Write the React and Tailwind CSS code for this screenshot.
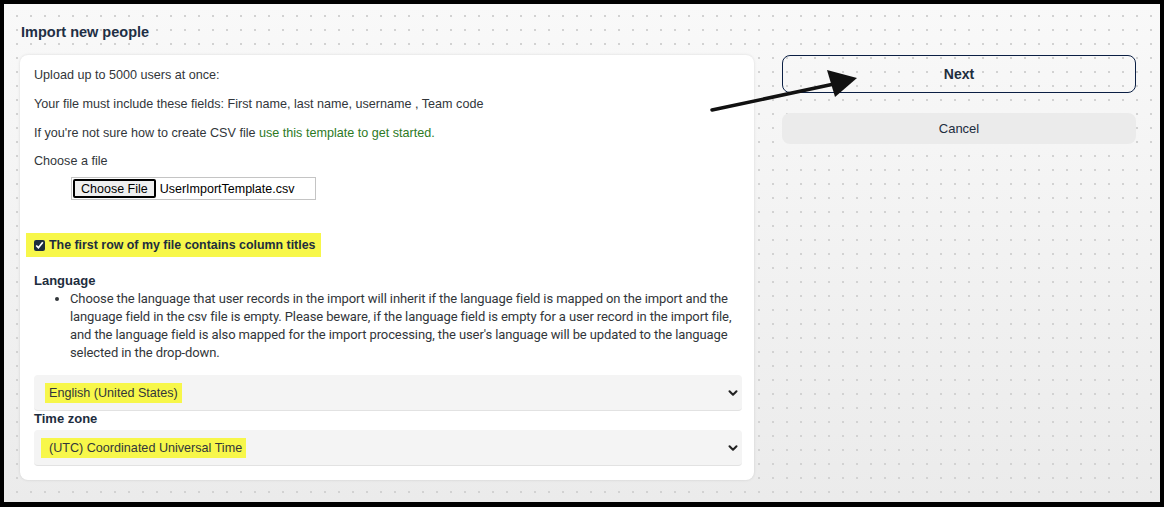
import { ChevronDown } from 'lucide-react';

const body = "font-['Liberation_Sans',Arial,sans-serif]";

function Select({ value, wide }) {
  return (
    <div className="flex h-[36px] items-center justify-between rounded-[4px] border-b border-[#e2e2e2] bg-[#f4f4f4] pl-[11px] pr-[2px]">
      <span className={`bg-[#f7f74a] py-[2px] text-[12.6px] leading-[16px] text-[#32363a] ${wide ? 'pl-[8px] pr-[4px] -ml-[4px]' : 'px-[4px]'}`}>
        {value}
      </span>
      <ChevronDown size={14} strokeWidth={3.5} className="text-[#222]" />
    </div>
  );
}

function Arrow() {
  return (
    <svg className="pointer-events-none absolute left-[706px] top-[68px]" width="160" height="50" viewBox="0 0 160 50">
      <line x1="6" y1="42" x2="128" y2="16" stroke="#111" strokeWidth="3.5" strokeLinecap="round" />
      <polygon points="151,10 121,2 129,29" fill="#111" />
    </svg>
  );
}

export default function App() {
  return (
    <div className={`relative h-[507px] w-[1164px] bg-black pb-[5px] pl-[4px] pr-[4px] pt-[4px] ${body}`}>
      <div className="h-full w-full bg-[radial-gradient(circle,#d2d2d2_0.9px,transparent_1.3px),linear-gradient(#f9f9f9,#ebebeb)] [background-position:6px_5px,0_0] [background-size:14px_14px,100%_100%] px-[16px] pt-[18px]">

        {/* Page title */}
        <h1 className="mb-[13px] pl-[1px] text-[14.5px] font-bold leading-[20px] text-[#1f2f45]">
          Import new people
        </h1>

        <div className="flex items-start gap-[28px]">

          {/* Import form card */}
          <div className="w-[734px] rounded-[8px] bg-white pb-[14px] pl-[14px] pr-[12px] pt-[11px] shadow-[0_0_3px_rgba(0,0,0,0.12)] text-[12.6px] leading-[18px] text-[#32363a]">
            <p className="mb-[11px]">Upload up to 5000 users at once:</p>
            <p className="mb-[11px]">Your file must include these fields: First name, last name, username , Team code</p>
            <p className="mb-[10px]">
              If you're not sure how to create CSV file <span className="text-[#2d7a1f]">use this template to get started.</span>
            </p>
            <p>Choose a file</p>

            <div className="ml-[37px] mt-[7px] flex h-[23px] w-[245px] items-center border border-[#c4c4c4] pl-[1px]">
              <span className="flex h-[19px] items-center rounded-[2px] border-2 border-black bg-[#efefef] px-[6px] text-[12.5px] text-black">
                Choose File
              </span>
              <span className="ml-[4px] text-[12.5px] text-black">UserImportTemplate.csv</span>
            </div>

            <div className="mt-[33px] flex">
              <label className="-ml-[8px] flex h-[24px] items-center gap-[4px] whitespace-nowrap bg-[#f7f74a] pl-[8px] pr-[6px]">
                <input type="checkbox" defaultChecked className="m-0 h-[11px] w-[11px] accent-[#1d2d3e]" />
                <span className="text-[12.4px] font-bold text-[#1d2d3e]">The first row of my file contains column titles</span>
              </label>
            </div>

            <h2 className="mt-[15px] text-[13px] font-bold text-[#1d2d3e]">Language</h2>
            <ul className="list-disc pl-[36px] font-['Roboto',sans-serif] text-[13px] tracking-[-0.1px] leading-[18px] text-[#32363a]">
              <li>
                Choose the language that user records in the import will inherit if the language field is mapped on the import and the
                language field in the csv file is empty. Please beware, if the language field is empty for a user record in the import file,
                and the language field is also mapped for the import processing, the user's language will be updated to the language
                selected in the drop-down.
              </li>
            </ul>

            <div className="mt-[13px]">
              <Select value="English (United States)" />
            </div>
            <h2 className="text-[13px] font-bold leading-[16px] text-[#1d2d3e]">Time zone</h2>
            <div className="mt-[3px]">
              <Select value="(UTC) Coordinated Universal Time" wide />
            </div>
          </div>

          {/* Actions */}
          <div className="flex w-[354px] flex-col gap-[20px]">
            <button className="h-[38px] rounded-[8px] border border-[#0b1f44] text-[14px] font-bold text-[#1d2d3e]">
              Next
            </button>
            <button className="h-[31px] rounded-[8px] bg-[#ebebeb] text-[13px] text-[#1d2d3e]">
              Cancel
            </button>
          </div>
        </div>
      </div>
      <Arrow />
    </div>
  );
}
